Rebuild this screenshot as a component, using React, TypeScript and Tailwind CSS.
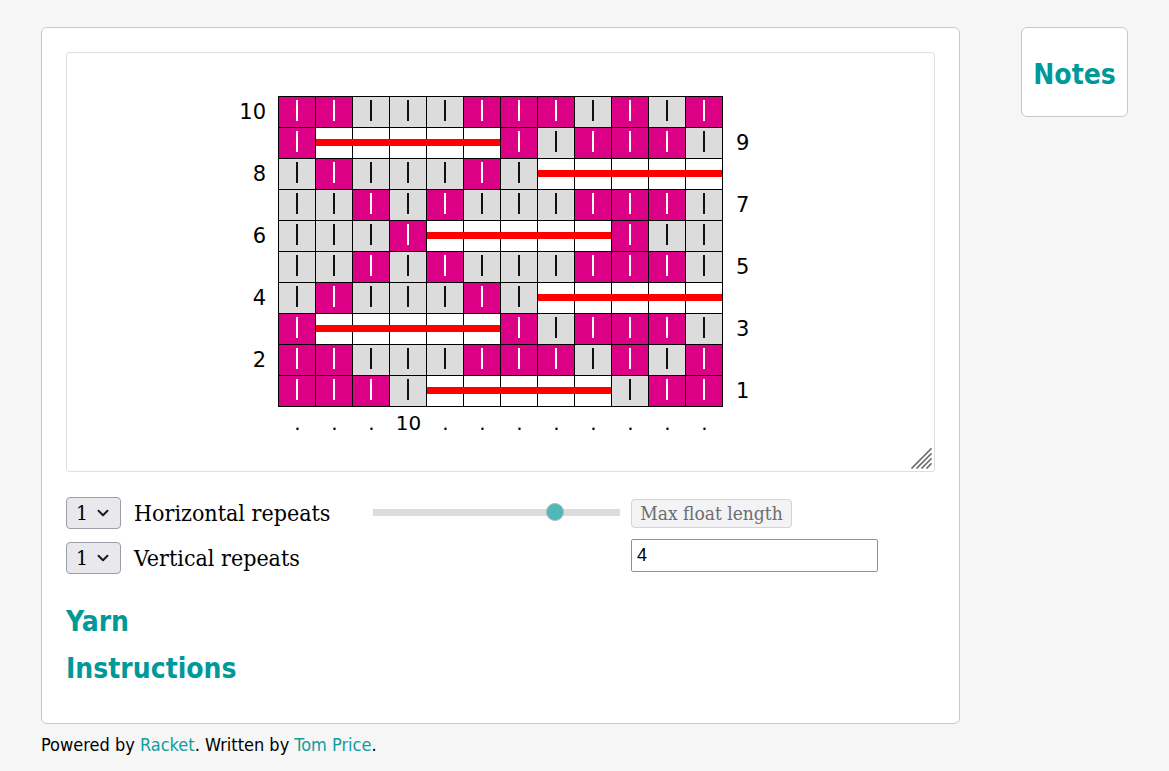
import { ChevronDown } from "lucide-react";

// M = magenta stitch, G = grey stitch, F = float
const ROWS: string[] = [
    "MMGGGMMMGMGM", // 10
    "MFFFFFMGMMMG", // 9
    "GMGGGMGFFFFF", // 8
    "GGMGMGGGMMMG", // 7
    "GGGMFFFFFMGG", // 6
    "GGMGMGGGMMMG", // 5
    "GMGGGMGFFFFF", // 4
    "MFFFFFMGMMMG", // 3
    "MMGGGMMMGMGM", // 2
    "MMMGFFFFFGMM", // 1
];

const sans = "font-['DejaVu_Sans_Condensed','DejaVu_Sans',sans-serif] font-stretch-condensed";
const serif = "font-['DejaVu_Serif_Condensed','DejaVu_Serif',serif] font-stretch-condensed";

function Cell({ kind, nextFloat }: { kind: string; nextFloat: boolean }) {
    if (kind === "F") {
        return (
            <div className="relative w-[37px] h-[31px] border-r border-b border-black bg-white">
                <div
                    className={`absolute left-0 top-[11px] h-[7px] bg-[#ff0000] ${
                        nextFloat ? "right-[-1px] z-10" : "right-0"
                    }`}
                />
            </div>
        );
    }
    const magenta = kind === "M";
    return (
        <div
            className={`w-[37px] h-[31px] border-r border-b border-black flex justify-center pt-[3px] ${
                magenta ? "bg-[#dc0087]" : "bg-[#dcdcdc]"
            }`}
        >
            <div className={`w-[2px] h-[21px] ${magenta ? "bg-white" : "bg-[#111]"}`} />
        </div>
    );
}

function Chart() {
    return (
        <div className="flex flex-col items-center pt-[43px]">
            <div className="flex">
                {/* left labels (even rows) */}
                <div className="w-[60px] flex flex-col items-end pr-[12px] pt-[1px]">
                    {ROWS.map((_, i) => {
                        const n = 10 - i;
                        return (
                            <div key={i} className="h-[31px] flex items-center text-[21px] leading-none text-black font-['DejaVu_Sans',sans-serif]">
                                {n % 2 === 0 ? n : ""}
                            </div>
                        );
                    })}
                </div>

                {/* grid */}
                <div className="border-l border-t border-black">
                    {ROWS.map((row, r) => (
                        <div key={r} className="flex">
                            {row.split("").map((k, c) => (
                                <Cell key={c} kind={k} nextFloat={k === "F" && row[c + 1] === "F"} />
                            ))}
                        </div>
                    ))}
                </div>

                {/* right labels (odd rows) */}
                <div className="w-[60px] flex flex-col items-start pl-[13px] pt-[1px]">
                    {ROWS.map((_, i) => {
                        const n = 10 - i;
                        return (
                            <div key={i} className="h-[31px] flex items-center text-[21px] leading-none text-black font-['DejaVu_Sans',sans-serif]">
                                {n % 2 === 1 ? n : ""}
                            </div>
                        );
                    })}
                </div>
            </div>

            {/* column labels */}
            <div className="flex pl-[1px] mt-[6px]">
                {Array.from({ length: 12 }).map((_, i) => (
                    <div key={i} className="w-[37px] text-center text-[20px] leading-[20px] text-black font-['DejaVu_Sans',sans-serif]">
                        {i === 3 ? "10" : "."}
                    </div>
                ))}
            </div>
        </div>
    );
}

function ResizeHandle() {
    return (
        <svg className="absolute right-[2px] bottom-[2px]" width="22" height="22" viewBox="0 0 22 22">
            <g stroke="#6b6b6b" strokeWidth="1.6" strokeLinecap="square">
                <line x1="21" y1="2" x2="2" y2="21" />
                <line x1="21" y1="7" x2="7" y2="21" />
                <line x1="21" y1="12" x2="12" y2="21" />
                <line x1="21" y1="17" x2="17" y2="21" />
            </g>
        </svg>
    );
}

function Select() {
    return (
        <div className="w-[55px] h-[32px] shrink-0 rounded-[4px] border border-[#9d9da6] bg-[#e9e9ed] flex items-center pl-[9px] pr-[8px] justify-between">
            <span className={`${serif} text-[21px] leading-none text-black`}>1</span>
            <ChevronDown size={18} strokeWidth={2.6} className="text-[#1b1b1b]" />
        </div>
    );
}

export default function App() {
    return (
        <div className="min-h-[771px] bg-[#f6f6f6] pl-[41px] pt-[27px]">
            <div className="flex items-start gap-[61px]">
                {/* Main card */}
                <div className="w-[919px] rounded-[6px] border border-[#c8c8c8] bg-white p-[24px]">
                    <div className="relative h-[420px] rounded-[3px] border border-[#dfdfdf]">
                        <Chart />
                        <ResizeHandle />
                    </div>

                    {/* Controls */}
                    <div className="mt-[25px] flex">
                        <div className="w-[307px] flex flex-col gap-[13px]">
                            <div className="flex items-center gap-[13px]">
                                <Select />
                                <span className={`${serif} text-[23px] leading-none text-black`}>Horizontal repeats</span>
                            </div>
                            <div className="flex items-center gap-[13px]">
                                <Select />
                                <span className={`${serif} text-[23px] leading-none text-black`}>Vertical repeats</span>
                            </div>
                        </div>

                        <div className="relative w-[247px] h-[30px] flex items-center">
                            <div className="w-full h-[7px] bg-[#dcdcdc]" />
                            <div className="absolute left-[173px] top-[6px] w-[18px] h-[18px] rounded-full bg-[#4fb8b8] border border-[#b5b5b5]" />
                        </div>

                        <div className="ml-[11px] flex flex-col gap-[11px] pt-[2px]">
                            <button className={`w-[161px] h-[29px] rounded-[4px] border border-[#d2d2d8] bg-[#f3f3f5] ${serif} text-[19px] leading-none text-[#6d6d6d]`}>
                                Max float length
                            </button>
                            <div className="w-[247px] h-[33px] rounded-[2px] border border-[#8f8f9d] bg-white flex items-center px-[5px] text-[18px] text-black font-['Liberation_Sans',sans-serif]">
                                4
                            </div>
                        </div>
                    </div>

                    {/* Sections */}
                    <div className="mt-[31px] flex flex-col gap-[13px] pb-[13px]">
                        <h3 className={`${sans} text-[28px] leading-[34px] font-bold text-[#009999]`}>Yarn</h3>
                        <h3 className={`${sans} text-[28px] leading-[34px] font-bold text-[#009999]`}>Instructions</h3>
                    </div>
                </div>

                {/* Notes */}
                <div className="w-[107px] h-[90px] rounded-[6px] border border-[#c8c8c8] bg-white flex items-center justify-center pt-[5px]">
                    <span className={`${sans} text-[28px] leading-none font-bold text-[#009999]`}>Notes</span>
                </div>
            </div>

            <p className={`mt-[10px] ${sans} text-[18px] leading-[22px] text-black`}>
                Powered by <a className="text-[#139c9c]">Racket</a>. Written by <a className="text-[#139c9c]">Tom Price</a>.
            </p>
        </div>
    );
}
